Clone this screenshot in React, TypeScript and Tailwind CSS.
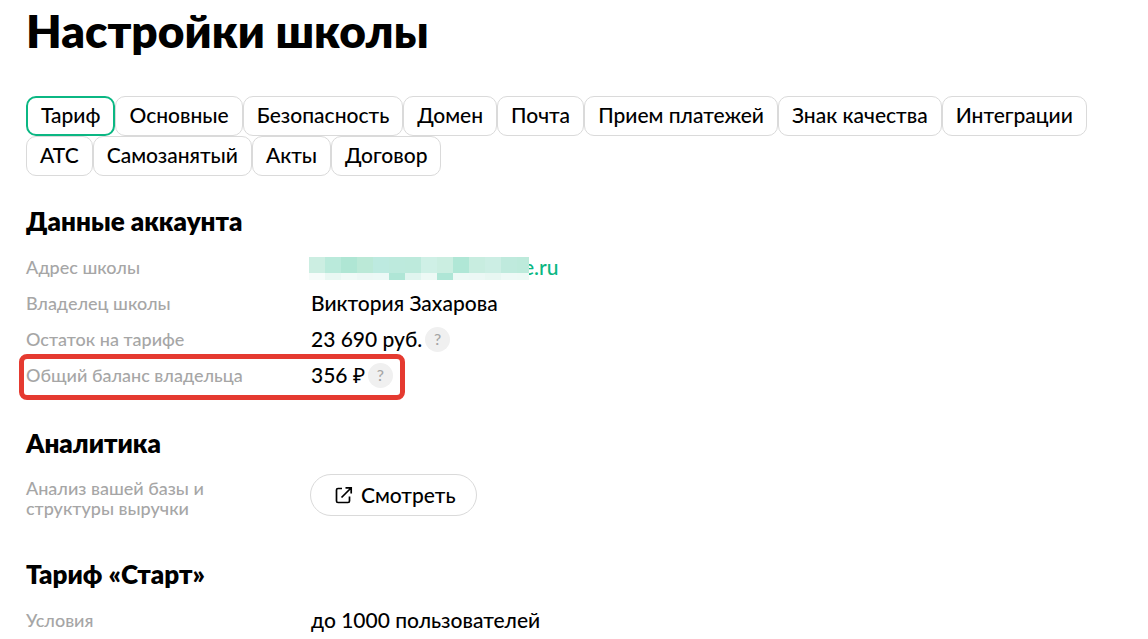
import type { ReactNode } from 'react';

const tabs = [
  'Тариф',
  'Основные',
  'Безопасность',
  'Домен',
  'Почта',
  'Прием платежей',
  'Знак качества',
  'Интеграции',
  'АТС',
  'Самозанятый',
  'Акты',
  'Договор',
];

const maskTop = ['#cceee2', '#baeadb', '#afe6d4', '#bbe9d7', '#bdeae0', '#bdeadd', '#bdeadc', '#cff0e6', '#cbeee1', '#b0e7d6', '#c8ede0', '#cceee4', '#bfeadd', '#bdeadb'];
const maskBottom = ['#f6fcfa', '#e9f8f3', '#f0faf7', '#ecf8f5', '#ecf9f6', '#afe6d6', '#e0f5ef', '#edf9f5', '#afe6d6', '#edf9f5', '#ecf8f5', '#e8f7f2', '#eef9f6', '#edf9f5'];

function Row({ label, children }: { label: string; children: ReactNode }) {
  return (
    <div className="flex min-h-9 items-center">
      <dt className="w-[285px] shrink-0 pb-1 text-lg leading-5 text-[#a6a6a6]">{label}</dt>
      <dd className="flex items-center pb-1 text-[21px] leading-6">{children}</dd>
    </div>
  );
}

function Hint({ label }: { label: string }) {
  return (
    <button
      type="button"
      aria-label={label}
      className="ml-[3px] flex size-[25px] items-center justify-center rounded-full bg-[#f0f0f0] text-base leading-4 text-[#a6a6a6]"
    >
      ?
    </button>
  );
}

function Mask() {
  return (
    <svg aria-hidden="true" viewBox="0 0 220 23" className="relative -ml-0.5 mt-0.5 h-[23px] w-[220px]" shapeRendering="crispEdges">
      {maskTop.map((fill, i) => (
        <rect key={i} x={i * 16} y="0" width="16" height="16" fill={fill} />
      ))}
      {maskBottom.map((fill, i) => (
        <rect key={i} x={i * 16} y="16" width="16" height="7" fill={fill} />
      ))}
    </svg>
  );
}

function ExternalIcon() {
  return (
    <svg aria-hidden="true" viewBox="0 0 18 18" className="size-[18px]" fill="none" stroke="currentColor" strokeWidth="1.7">
      <path d="M7 2.5H3Q1.5 2.5 1.5 4V15Q1.5 16.5 3 16.5H13Q14.5 16.5 14.5 15V10.5" />
      <path d="M6.5 11.5 16 2M10.5 1.8H16.2V7.5" />
    </svg>
  );
}

export default function App() {
  return (
    <main className="bg-white pl-[26px] pr-12 pt-[7px] font-['Lato',sans-serif] font-medium text-black">
      <h1 className="text-[46px] font-extrabold leading-[48px]">Настройки школы</h1>

      <nav aria-label="Разделы настроек" className="mt-[41px] flex flex-wrap">
        {tabs.map((tab, i) => (
          <button
            key={tab}
            type="button"
            aria-current={i === 0 ? 'page' : undefined}
            className={
              i === 0
                ? 'h-10 rounded-[10px] border-2 border-[#0bb783] px-[13px] pb-0.5 text-[21px] leading-6'
                : 'h-10 rounded-[10px] border border-[#dadada] px-[13px] pb-0.5 text-[21px] leading-6'
            }
          >
            {tab}
          </button>
        ))}
      </nav>

      <section className="mt-[31px]">
        <h2 className="text-[26px] font-extrabold leading-7">Данные аккаунта</h2>
        <dl className="mt-4">
          <Row label="Адрес школы">
            <Mask />
            <a href="#school" className="-ml-1.5 text-[#0bb783]">e.ru</a>
          </Row>
          <Row label="Владелец школы">Виктория Захарова</Row>
          <Row label="Остаток на тарифе">
            23 690 руб.
            <Hint label="Об остатке на тарифе" />
          </Row>
          <div className="-my-[5px] -ml-[7px] w-[386px] rounded-lg border-[5px] border-[#e53a30] pl-0.5">
            <Row label="Общий баланс владельца">
              356 ₽
              <Hint label="Об общем балансе" />
            </Row>
          </div>
        </dl>
      </section>

      <section className="mt-[34px]">
        <h2 className="text-[26px] font-extrabold leading-7">Аналитика</h2>
        <div className="mt-[17px] flex items-start">
          <p className="w-[284px] shrink-0 pr-20 pt-1 text-lg leading-5 text-[#a6a6a6]">
            Анализ вашей базы и структуры выручки
          </p>
          <button type="button" className="flex h-[42px] items-center gap-2 rounded-full border border-[#dadada] pl-6 pr-5 text-[21px] leading-6">
            <ExternalIcon />
            Смотреть
          </button>
        </div>
      </section>

      <section className="mt-[42px]">
        <h2 className="text-[26px] font-extrabold leading-7">Тариф «Старт»</h2>
        <dl className="mt-4">
          <Row label="Условия">до 1000 пользователей</Row>
        </dl>
      </section>
    </main>
  );
}
